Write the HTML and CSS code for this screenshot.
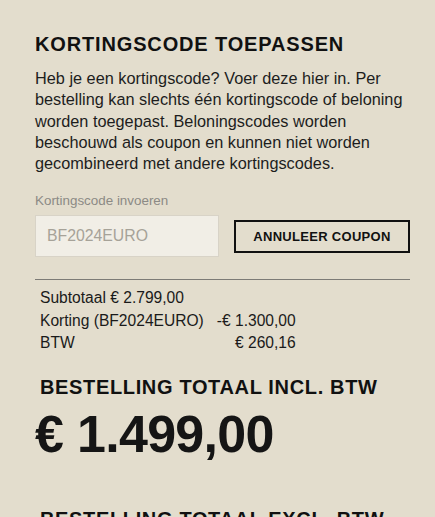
FILE: index.html
```html
<!DOCTYPE html>
<html lang="nl">
<head>
<meta charset="utf-8">
<title>Kortingscode</title>
<link rel="stylesheet" href="styles.css">
</head>
<body>
<main class="panel">
  <h2 class="title">KORTINGSCODE TOEPASSEN</h2>
  <p class="intro">Heb je een kortingscode? Voer deze hier in. Per bestelling kan slechts één kortingscode of beloning worden toegepast. Beloningscodes worden beschouwd als coupon en kunnen niet worden gecombineerd met andere kortingscodes.</p>
  <label class="field-label" for="code">Kortingscode invoeren</label>
  <div class="code-row">
    <input id="code" class="code-input" type="text" value="BF2024EURO" readonly>
    <button class="cancel-btn" type="button">ANNULEER COUPON</button>
  </div>
  <hr class="divider">
  <div class="summary">
    <div class="summary-line">Subtotaal € 2.799,00</div>
    <div class="summary-grid">
      <span>Korting (BF2024EURO)</span><span class="amount">-€ 1.300,00</span>
      <span>BTW</span><span class="amount">€ 260,16</span>
    </div>
  </div>
  <h3 class="total-title">BESTELLING TOTAAL INCL. BTW</h3>
  <div class="total-amount">€ 1.499,00</div>
  <h3 class="total-title excl">BESTELLING TOTAAL EXCL. BTW</h3>
</main>
</body>
</html>
```
FILE: styles.css
```css
html, body {
  margin: 0;
  padding: 0;
  background: #e3ddcd;
}
body {
  font-family: "Liberation Sans", Arial, sans-serif;
  color: #1a1a1a;
}
.panel {
  padding: 33px 25px 0 35px;
  width: 375px;
}
.title {
  margin: 0;
  font-size: 20px;
  line-height: 23px;
  font-weight: 700;
  letter-spacing: 0.85px;
  color: #111;
}
.intro {
  margin: 12px 0 0;
  font-size: 16.3px;
  line-height: 21.3px;
  color: #1d1d1d;
}
.field-label {
  display: block;
  margin-top: 19px;
  font-size: 13.4px;
  line-height: 16px;
  color: #8c8a85;
}
.code-row {
  display: flex;
  align-items: center;
  gap: 15px;
  margin-top: 6px;
}
.code-input {
  box-sizing: border-box;
  width: 184px;
  height: 42px;
  margin: 0;
  padding: 0 11px;
  border: 1px solid #d8d3c7;
  background: #f1eee6;
  font-family: "Liberation Sans", Arial, sans-serif;
  font-size: 15.8px;
  color: #a6a298;
  outline: none;
}
.cancel-btn {
  box-sizing: border-box;
  width: 176px;
  height: 33px;
  margin: 1px 0 0;
  padding: 0;
  border: 2px solid #111;
  background: transparent;
  font-family: "Liberation Sans", Arial, sans-serif;
  font-size: 13px;
  font-weight: 700;
  letter-spacing: 0.3px;
  color: #111;
}
.divider {
  margin: 22px 0 0;
  border: 0;
  border-top: 1px solid #7d7b76;
  height: 0;
}
.summary {
  margin-top: 7px;
  padding-left: 5px;
  font-size: 15.6px;
  line-height: 22.5px;
  color: #1a1a1a;
}
.summary-grid {
  display: inline-grid;
  grid-template-columns: auto auto;
  column-gap: 13px;
}
.summary-grid .amount {
  text-align: right;
}
.total-title {
  margin: 21px 0 0;
  padding-left: 5px;
  font-size: 20px;
  line-height: 23px;
  font-weight: 700;
  letter-spacing: 0.65px;
  color: #111;
}
.total-amount {
  margin-top: 5px;
  font-size: 52px;
  line-height: 60px;
  font-weight: 700;
  letter-spacing: -0.7px;
  color: #151515;
}
.total-title.excl {
  margin-top: 44px;
}
```
